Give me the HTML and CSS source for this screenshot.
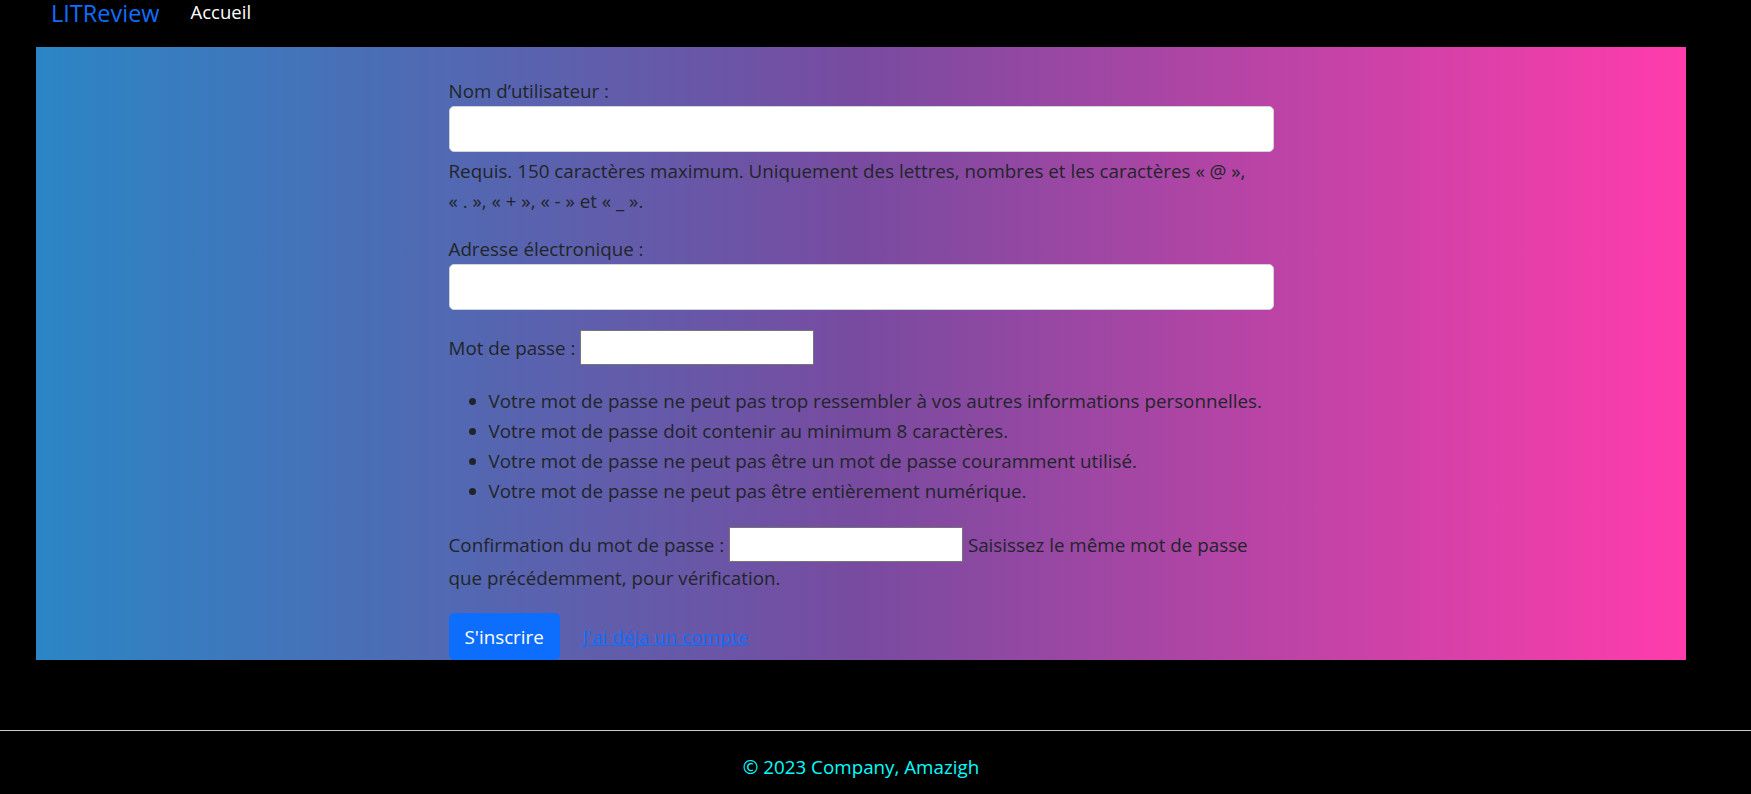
FILE: index.html
```html
<!DOCTYPE html>
<html lang="fr">
<head>
<meta charset="utf-8">
<title>LITReview</title>
<link rel="stylesheet" href="styles.css">
</head>
<body>
<nav class="navbar">
  <a class="brand" href="#">LITReview</a>
  <a class="nav-link" href="#">Accueil</a>
</nav>
<main class="hero">
  <form class="signup">
    <p class="field"><label for="u">Nom d’utilisateur :</label><input class="form-control" id="u" type="text"><span class="helptext block">Requis. 150 caractères maximum. Uniquement des lettres, nombres et les caractères «&nbsp;@&nbsp;», «&nbsp;.&nbsp;», «&nbsp;+&nbsp;», «&nbsp;-&nbsp;» et «&nbsp;_&nbsp;».</span></p>
    <p class="field"><label for="e">Adresse électronique :</label><input class="form-control" id="e" type="email"></p>
    <p class="field inline-field"><label for="p1">Mot de passe :</label> <input class="plain" id="p1" type="password"></p>
    <ul class="rules">
      <li>Votre mot de passe ne peut pas trop ressembler à vos autres informations personnelles.</li>
      <li>Votre mot de passe doit contenir au minimum 8 caractères.</li>
      <li>Votre mot de passe ne peut pas être un mot de passe couramment utilisé.</li>
      <li>Votre mot de passe ne peut pas être entièrement numérique.</li>
    </ul>
    <p class="field inline-field confirm"><label for="p2">Confirmation du mot de passe :</label> <input class="plain" id="p2" type="password"> <span class="helptext">Saisissez le même mot de passe que précédemment, pour vérification.</span></p>
    <div class="actions">
      <button class="btn" type="button">S'inscrire</button>
      <a class="link" href="#">J'ai déja un compte</a>
    </div>
  </form>
</main>
<hr class="sep">
<footer class="footer">
  <p class="copy">© 2023 Company, Amazigh</p>
</footer>
</body>
</html>
```
FILE: styles.css
```css
* { box-sizing: border-box; }
html, body { margin: 0; padding: 0; }
body {
  background: #000;
  font-family: "Open Sans", "Noto Sans", sans-serif;
  font-size: 18.8px;
  line-height: 30px;
  color: #212529;
  width: 1751px;
  height: 794px;
  overflow: hidden;
}
.navbar {
  display: flex;
  align-items: flex-start;
  height: 47px;
  padding-left: 51px;
}
.brand {
  color: #0d6efd;
  font-size: 23.5px;
  line-height: 26px;
  text-decoration: none;
  margin-right: 31px;
}
.nav-link {
  color: #fff;
  font-size: 18.5px;
  line-height: 20px;
  padding-top: 2px;
  text-decoration: none;
}
.hero {
  margin-left: 36px;
  width: 1650px;
  background: linear-gradient(to right, #2b86c5 0%, #784ba0 50%, #ff3cac 100%);
  display: flex;
  justify-content: center;
  padding-top: 29px;
}
.signup {
  width: 825px;
}
.field {
  margin: 0 0 18px;
}
.field label { display: inline; }
.helptext.block {
  display: block;
  margin-top: 4px;
}
.form-control {
  display: block;
  width: 100%;
  height: 46px;
  border: 1px solid #ced4da;
  border-radius: 5px;
  background: #fff;
  font: inherit;
  padding: 7px 15px;
}
.inline-field {
  padding-top: 1px;
  margin-bottom: 20px;
}
.plain {
  width: 234px;
  height: 35px;
  margin: 1px 0;
  border: 1px solid #767676;
  background: #fff;
  padding: 1px 2px;
  font: inherit;
  vertical-align: baseline;
}
.confirm {
  padding-top: 0;
}
.rules {
  margin: 0 0 20px;
  padding-left: 40px;
}
.actions {
  display: flex;
  align-items: center;
  gap: 23px;
}
.btn {
  font: inherit;
  color: #fff;
  background: #0d6efd;
  border: 1px solid #0d6efd;
  border-radius: 5px;
  padding: 7px 15px;
  height: 47px;
}
.link {
  color: #0d6efd;
  text-decoration: underline;
}
.sep {
  margin: 70px 0 0;
  border: 0;
  border-top: 1px solid #cfcfcf;
  height: 0;
}
.footer {
  margin-left: 36px;
  width: 1650px;
  text-align: center;
  padding-top: 21px;
}
.copy {
  margin: 0;
  color: #00ffff;
}
```
